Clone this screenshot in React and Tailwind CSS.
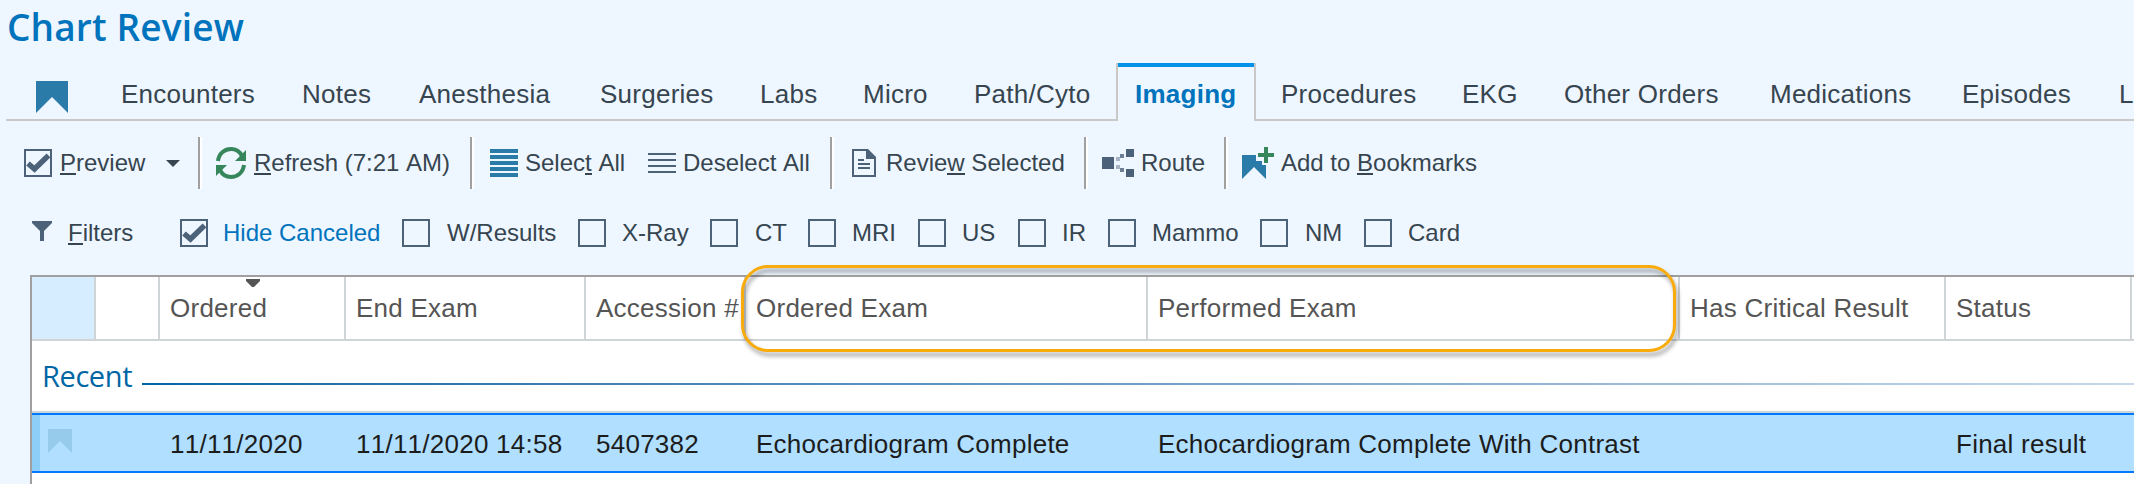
const TABS = [
  { name: "Encounters", className: "w-[181px]" },
  { name: "Notes", className: "w-[117px]" },
  { name: "Anesthesia", className: "w-[181px]" },
  { name: "Surgeries", className: "w-[160px]" },
  { name: "Labs", className: "w-[103px]" },
  { name: "Micro", className: "w-[111px]" },
  { name: "Path/Cyto", className: "w-[142px]" },
  { name: "Imaging", active: true },
  { name: "Procedures", className: "w-[206px] pl-[25px]" },
  { name: "EKG", className: "w-[102px]" },
  { name: "Other Orders", className: "w-[206px]" },
  { name: "Medications", className: "w-[192px]" },
  { name: "Episodes", className: "w-[157px]" },
  { name: "L", className: "w-[100px]" },
];

const FILTERS = [
  { name: "Hide Canceled", checked: true, className: "w-[222px] gap-[15px]" },
  { name: "W/Results", className: "w-[176px] gap-[17px]" },
  { name: "X-Ray", className: "w-[132px] gap-4" },
  { name: "CT", className: "w-[98px] gap-[17px]" },
  { name: "MRI", className: "w-[110px] gap-4" },
  { name: "US", className: "w-[100px] gap-4" },
  { name: "IR", className: "w-[90px] gap-4" },
  { name: "Mammo", className: "w-[152px] gap-4" },
  { name: "NM", className: "w-[104px] gap-[17px]" },
  { name: "Card", className: "w-[110px] gap-4" },
];

const COLUMNS = [
  { label: "", value: "", width: "w-[64px]", selected: true },
  { label: "", value: "", width: "w-[64px]" },
  { label: "Ordered", value: "11/11/2020", width: "w-[186px]", sorted: true },
  { label: "End Exam", value: "11/11/2020 14:58", width: "w-[240px]" },
  { label: "Accession #", value: "5407382", width: "w-[160px]" },
  { label: "Ordered Exam", value: "Echocardiogram Complete", width: "w-[402px]" },
  { label: "Performed Exam", value: "Echocardiogram Complete With Contrast", width: "w-[532px]" },
  { label: "Has Critical Result", value: "", width: "w-[266px]" },
  { label: "Status", value: "Final result", width: "w-[186px]" },
];

function Bookmark({ className }) {
  return (
    <svg viewBox="0 0 32 32" className={className} fill="currentColor">
      <path d="M0 0H32V32L16 16L0 32Z" />
    </svg>
  );
}

function Checkbox({ checked }) {
  return (
    <span className="flex size-7 shrink-0 border-2 border-[#4c6279]">
      {checked && (
        <svg viewBox="0 0 24 24" className="size-6" fill="none" stroke="#4c6279" strokeWidth="5.5">
          <path d="M2 12.5L8.5 18L22.5 4.5" />
        </svg>
      )}
    </span>
  );
}

function Separator({ className }) {
  return <span className={`h-[52px] w-1 shrink-0 border-l-2 border-[#a0a0a0] bg-white ${className}`} />;
}

// Underlined access key inside a label
function Key({ children }) {
  return <span className="inline-block h-[25px] border-b-2 border-[#36454f] leading-[25px]">{children}</span>;
}

function RefreshIcon() {
  return (
    <svg viewBox="0 0 30 32" className="h-8 w-[30px] shrink-0" fill="none" stroke="#35875b" strokeWidth="4">
      <path d="M2 14C3 6 9 2 15 2C20 2 24 5 26 9" />
      <path d="M28 18C27 26 21 30 15 30C10 30 6 27 4 23" />
      <path d="M30 3V14H19Z" fill="#35875b" stroke="none" />
      <path d="M0 29V18H11Z" fill="#35875b" stroke="none" />
    </svg>
  );
}

function DocumentIcon() {
  return (
    <svg viewBox="0 0 24 28" className="h-7 w-6 shrink-0" fill="none" stroke="#4c6279" strokeWidth="2">
      <path d="M1 1H15L23 9V27H1Z" />
      <path d="M14 0H16L24 8V10H14Z" fill="#4c6279" stroke="none" />
      <path d="M6 11H12M6 15H18M6 19H18" />
    </svg>
  );
}

function RouteIcon() {
  return (
    <svg viewBox="0 0 32 28" className="h-7 w-8 shrink-0" fill="#4c6279">
      <path d="M0 8H12V20H0ZM24 0H32V8H24ZM24 20H32V28H24Z" />
      <path d="M18 5H22V9H18ZM18 19H22V23H18Z" opacity="0.8" />
      <path d="M14 8H18V12H14ZM14 16H18V20H14Z" opacity="0.45" />
    </svg>
  );
}

function AddBookmarkIcon() {
  return (
    <svg viewBox="0 0 32 32" className="size-8 shrink-0">
      <path d="M0 8H14V14H20V18H24V32L12 20L0 32Z" fill="#2a7ba7" />
      <path d="M22 0H26V6H32V10H26V16H22V10H16V6H22Z" fill="#35875b" />
    </svg>
  );
}

export default function App() {
  return (
    <div className="relative h-[484px] w-[2134px] overflow-hidden bg-[#eef6ff] font-['Liberation_Sans',sans-serif] text-[#36454f] [font-kerning:none]">
      <h1 className="h-[63px] pl-[7px] pt-[2px] font-['Open_Sans',sans-serif] text-[37px] font-semibold leading-[50px] tracking-[0.15px] text-[#0073bd]">
        Chart Review
      </h1>

      {/* Tabs */}
      <nav className="flex h-[58px] w-[2300px] pl-[6px] text-[26px] leading-[30px] tracking-[0.25px]">
        <div className="w-[115px] shrink-0 border-b-2 border-[#c8c8c8] pl-[30px] pt-[18px]">
          <Bookmark className="size-8 text-[#2a7ba7]" />
        </div>
        {TABS.map((tab) =>
          tab.active ? (
            <div key={tab.name} className="w-[140px] shrink-0 border-x-2 border-[#c8c8c8]">
              <div className="h-1 bg-[#0091ea]" />
              <p className="pl-[17px] pt-[12px] font-bold text-[#0073bd]">{tab.name}</p>
            </div>
          ) : (
            <div key={tab.name} className={`shrink-0 whitespace-nowrap border-b-2 border-[#c8c8c8] pt-4 ${tab.className}`}>
              {tab.name}
            </div>
          )
        )}
      </nav>

      {/* Toolbar */}
      <div className="flex h-[84px] items-center whitespace-nowrap pl-6 text-[24px] leading-[28px]">
        <Checkbox checked />
        <span className="ml-[8px] w-[106px]"><Key>P</Key>review</span>
        <svg viewBox="0 0 14 7" className="h-[7px] w-[14px]" fill="#36454f"><path d="M0 0H14L7 7Z" /></svg>
        <Separator className="ml-[18px] mr-[14px]" />
        <RefreshIcon />
        <span className="ml-[8px] w-[216px]"><Key>R</Key>efresh (7:21 AM)</span>
        <Separator className="mr-4" />
        <span className="flex flex-col gap-[2px]">
          {[0, 1, 2, 3, 4].map((i) => <span key={i} className="h-1 w-7 bg-[#2a7ba7]" />)}
        </span>
        <span className="ml-[7px] w-[123px]">Selec<Key>t</Key> All</span>
        <span className="flex flex-col gap-1">
          {[0, 1, 2, 3].map((i) => <span key={i} className="h-[2px] w-7 bg-[#4c6279]" />)}
        </span>
        <span className="ml-[7px] w-[147px]">Deselect All</span>
        <Separator className="mr-[18px]" />
        <DocumentIcon />
        <span className="ml-[10px] w-[198px]">Revie<Key>w</Key> Selected</span>
        <Separator className="mr-[14px]" />
        <RouteIcon />
        <span className="ml-[7px] w-[83px]">Route</span>
        <Separator className="mr-[14px]" />
        <AddBookmarkIcon />
        <span className="ml-[7px]">Add to <Key>B</Key>ookmarks</span>
      </div>

      {/* Filters */}
      <div className="flex h-[70px] items-start whitespace-nowrap pl-8 pt-[14px] text-[24px] leading-[28px]">
        <svg viewBox="0 0 20 20" className="mt-[2px] size-5" fill="#4c6279"><path d="M0 0H20V2L12 10V20H8V10L0 2Z" /></svg>
        <span className="ml-[16px] w-[112px]"><Key>F</Key>ilters</span>
        {FILTERS.map((f) => (
          <label key={f.name} className={`flex shrink-0 ${f.className}`}>
            <Checkbox checked={f.checked} />
            <span className={f.checked ? "text-[#0073bd]" : ""}>{f.name}</span>
          </label>
        ))}
      </div>

      {/* Results */}
      <div className="ml-[30px] h-[209px] w-[2200px] border-l-2 border-t-2 border-[#a0a0a0] bg-white text-[26px] leading-[30px] tracking-[0.25px]">
        <div className="flex h-16 border-b-2 border-[#cfd4d6] text-[#555]">
          {COLUMNS.map((c, i) => (
            <div key={i} className={`relative shrink-0 whitespace-nowrap border-r-2 border-[#cfd4d6] pl-[10px] pt-4 ${c.width} ${c.selected ? "bg-[#d5edff]" : ""}`}>
              {c.label}
              {c.sorted && (
                <svg viewBox="0 0 14 8" className="absolute left-[86px] top-[2px] h-2 w-[14px]" fill="#555"><path d="M0 0H14V2L8 8H6L0 2Z" /></svg>
              )}
            </div>
          ))}
        </div>
        <div className="flex h-[72px] overflow-hidden border-b-2 border-[#cfd4d6] pl-[9px] pt-[14px]">
          <span className="w-[101px] shrink-0 pl-[1px] font-['Open_Sans',sans-serif] text-[29px] leading-[42px] tracking-[-0.4px] text-[#0066a4]">Recent</span>
          <span className="mt-[28px] h-[2px] w-[2650px] shrink-0 bg-linear-to-r from-[#0066a4] to-[#ffffff]" />
        </div>
        <div className="flex h-[60px] border-y-2 border-[#0078ff] bg-[#b0dfff] text-[#1c1c1c]">
          <div className="flex w-[128px] shrink-0">
            <div className="w-2 bg-[#8dcef9]" />
            <Bookmark className="ml-2 mt-[14px] size-6 text-[#96cbeb]" />
          </div>
          {COLUMNS.slice(2).map((c) => (
            <div key={c.label} className={`shrink-0 whitespace-nowrap pl-[10px] pt-[14px] ${c.width}`}>{c.value}</div>
          ))}
        </div>
      </div>

      {/* Exam columns callout */}
      <div className="absolute left-[741px] top-[265px] h-[87px] w-[935px] rounded-[27px] border-3 border-[#f9ab0b] drop-shadow-[2px_4px_2px_rgba(0,0,0,0.4)]" />
    </div>
  );
}
